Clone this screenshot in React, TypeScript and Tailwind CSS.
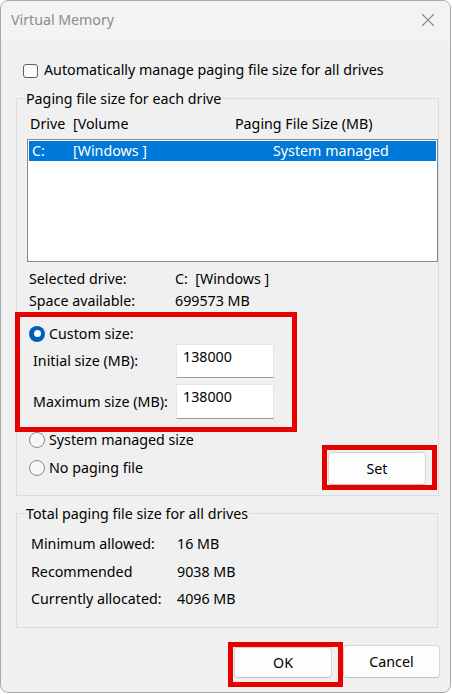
import React from "react";

function Radio({ checked = false }: { checked?: boolean }) {
  if (checked) {
    return (
      <span className="flex h-[16px] w-[16px] shrink-0 items-center justify-center rounded-full bg-[#005fb8]">
        <span className="h-[7px] w-[7px] rounded-full bg-white" />
      </span>
    );
  }
  return <span className="block h-[16px] w-[16px] shrink-0 rounded-full border border-[#8a8a8a] bg-[#f7f7f7]" />;
}

function SizeInput({ value }: { value: string }) {
  return (
    <div className="h-full w-[98px] border border-[#e6e6e6] border-b-[#9a9a9a] bg-white pl-[6px] pt-[2px] leading-[20px]">
      {value}
    </div>
  );
}

function Button({ label, className }: { label: string; className: string }) {
  return (
    <div
      className={
        "flex items-center justify-center rounded-[4px] border border-[#d4d4d4] border-b-[#c2c2c2] bg-[#fdfdfd] " +
        className
      }
    >
      {label}
    </div>
  );
}

export default function App() {
  return (
    <div className="h-[694px] w-[452px] bg-white" style={{ fontFamily: '"Noto Sans", "Segoe UI", sans-serif' }}>
      <div className="h-[693px] w-[451px] overflow-hidden rounded-[8px] border border-[#a9a9a9] bg-[#f0f0f0] text-[14.25px] leading-[20px] text-black">
        {/* title bar */}
        <div className="flex h-[40px] items-center justify-between bg-[#f3f3f3] pb-[2px] pl-[10px] pr-[14px]">
          <span className="text-[14.2px] text-[#8c8c8c]">Virtual Memory</span>
          <svg width="14" height="14" viewBox="0 0 14 14" className="mr-[1px]">
            <path d="M1 1 L13 13 M13 1 L1 13" stroke="#8c8c8c" strokeWidth="1.1" />
          </svg>
        </div>

        {/* auto manage */}
        <div className="mt-[20px] flex h-[20px] items-center pl-[22px]">
          <span className="block h-[14px] w-[15px] rounded-[3px] border border-[#616161] bg-[#fbfbfb]" />
          <span className="ml-[6px] -translate-y-[1px]">Automatically manage paging file size for all drives</span>
        </div>

        {/* group 1 */}
        <fieldset className="ml-[15px] mt-[8px] h-[407px] w-[422px] border border-[#dcdcdc]">
          <legend className="ml-[8px] px-[1px] leading-[19px]">Paging file size for each drive</legend>

          <div className="mt-[6px] flex h-[20px] items-center pl-[13px]">
            <span className="w-[43px]">Drive</span>
            <span className="w-[162px]">[Volume</span>
            <span>Paging File Size (MB)</span>
          </div>

          <div className="ml-[10px] mt-[5px] h-[123px] w-[411px] border border-[#828790] bg-white p-[1px]">
            <div className="flex h-[20px] items-center bg-[#0078d7] pl-[3px] text-white">
              <span className="w-[41px]">C:</span>
              <span className="w-[200px]">[Windows ]</span>
              <span>System managed</span>
            </div>
          </div>

          <div className="ml-[12px] mt-[7px] flex h-[20px] items-center">
            <span className="w-[146px]">Selected drive:</span>
            <span>C:&nbsp; [Windows ]</span>
          </div>
          <div className="ml-[12px] mt-[2px] flex h-[20px] items-center">
            <span className="w-[146px]">Space available:</span>
            <span>699573 MB</span>
          </div>

          {/* custom size, highlighted */}
          <div className="-ml-[2px] mt-[1px] h-[120px] w-[282px] border-[5px] border-[#e60000]">
            <div className="ml-[9px] mt-[7px] flex h-[19px] items-center">
              <Radio checked />
              <span className="ml-[4px]">Custom size:</span>
            </div>
            <div className="mt-[1px] flex h-[34px] items-center">
              <span className="ml-[13px] w-[143px]">Initial size (MB):</span>
              <SizeInput value="138000" />
            </div>
            <div className="mt-[6px] flex h-[35px] items-center">
              <span className="ml-[13px] w-[143px]">Maximum size (MB):</span>
              <SizeInput value="138000" />
            </div>
          </div>

          <div className="flex">
            <div className="ml-[12px] w-[293px]">
              <div className="-mt-[1px] flex h-[18px] items-center">
                <Radio />
                <span className="ml-[4px]">System managed size</span>
              </div>
              <div className="mt-[9px] flex h-[20px] items-center">
                <Radio />
                <span className="ml-[4px]">No paging file</span>
              </div>
            </div>
            <div className="mt-[13px] h-[45px] w-[115px] border-[5px] border-[#e60000] pl-[1px] pt-[2px]">
              <Button label="Set" className="h-[33px] w-[98px]" />
            </div>
          </div>
        </fieldset>

        {/* group 2 */}
        <fieldset className="ml-[15px] mt-[8px] h-[124px] w-[422px] border border-[#dcdcdc]">
          <legend className="ml-[8px] px-[1px] leading-[19px]">Total paging file size for all drives</legend>
          <div className="ml-[14px] mt-[11px] flex h-[20px] items-center">
            <span className="w-[146px]">Minimum allowed:</span>
            <span>16 MB</span>
          </div>
          <div className="ml-[14px] mt-[8px] flex h-[20px] items-center">
            <span className="w-[146px]">Recommended</span>
            <span>9038 MB</span>
          </div>
          <div className="ml-[14px] mt-[7px] flex h-[20px] items-center">
            <span className="w-[146px]">Currently allocated:</span>
            <span>4096 MB</span>
          </div>
        </fieldset>

        {/* footer buttons */}
        <div className="mt-[14px] flex items-start pl-[227px]">
          <div className="h-[45px] w-[115px] border-[5px] border-[#e60000] pl-[1px]">
            <Button label="OK" className="h-[31px] w-[98px]" />
          </div>
          <Button label="Cancel" className="ml-[0px] mt-[3px] h-[33px] w-[97px]" />
        </div>
      </div>
    </div>
  );
}
